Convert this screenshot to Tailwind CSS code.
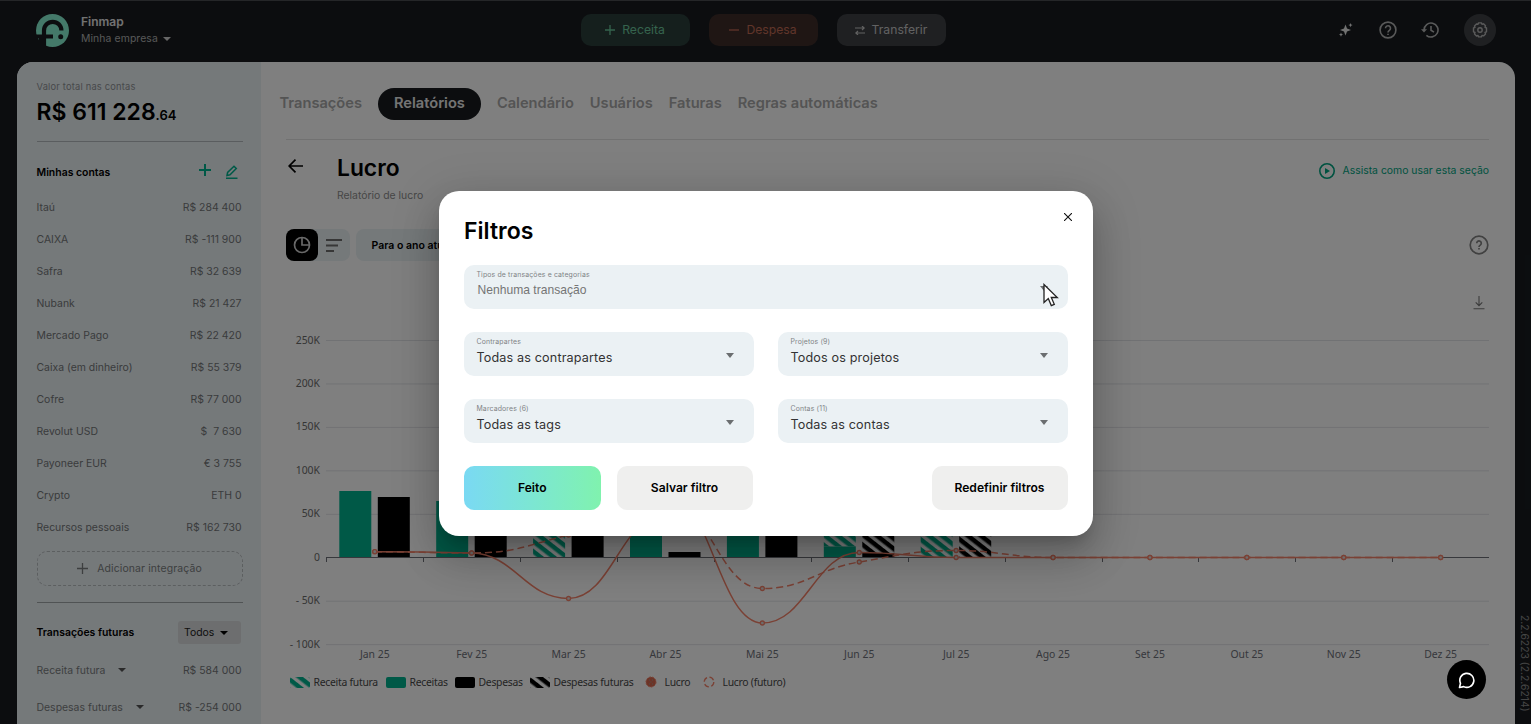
<!DOCTYPE html>
<html lang="pt-BR">
<head>
  <meta charset="UTF-8" />
  <meta name="viewport" content="width=device-width, initial-scale=1.0" />
  <title>Finmap - Lucro</title>
  <script src="https://cdn.jsdelivr.net/npm/@tailwindcss/browser@4"></script>
</head>
<body class="relative h-screen overflow-hidden bg-[#181b1f] font-['Inter',sans-serif] text-black">
  <!-- Header -->
  <header class="h-[62px] border-t border-[#4a4d50] flex items-start justify-between pl-[36px] pr-[35px] pt-[13px]">
    <div class="flex w-[394px]">
      <svg class="w-[33px] h-[33px]" viewBox="0 0 33 33">
        <circle cx="16.5" cy="16.5" r="16.5" fill="#88f2d2" />
        <path d="M8 32V16.500a8.700 8.700 0 0 1 17.400 0" fill="none" stroke="#181b1f" stroke-width="4.200" />
        <path d="M0 22.500h17" stroke="#181b1f" stroke-width="4" />
        <path d="M3 24h5v9H3z" fill="#181b1f" />
        <circle cx="24.700" cy="22.700" r="2.500" fill="#181b1f" />
      </svg>
      <div class="ml-3 pt-px">
        <p class="text-xs leading-[14px] font-semibold text-[#e4e4e4]">Finmap</p>
        <p class="mt-[3px] text-[10.4px] leading-[14px] tracking-[0.1px] text-[#b0b0b0] flex items-center">Minha empresa
          <svg class="ml-[5px] w-2 h-1" viewBox="0 0 8 4"><path d="M0 0h8L4 4z" fill="#cfcfcf" /></svg>
        </p>
      </div>
    </div>

    <div class="flex gap-[19px] text-[12.2px]">
      <button class="w-[109px] h-8 rounded-[10px] bg-[#2a3e3b] text-[#6ac79b] flex items-center justify-center gap-[7px]">
        <svg class="w-[10px] h-[10px]" viewBox="0 0 10 10"><path d="M5 0v10M0 5h10" stroke="currentColor" stroke-width="1.3" /></svg>Receita
      </button>
      <button class="w-[109px] h-8 rounded-[10px] bg-[#3e2d29] text-[#c06a55] flex items-center justify-center gap-[7px]">
        <svg class="w-[10px] h-[10px]" viewBox="0 0 10 10"><path d="M0 5h10" stroke="currentColor" stroke-width="1.3" /></svg>Despesa
      </button>
      <button class="w-[109px] h-8 rounded-[10px] bg-[#3f4145] text-[#c4c4c4] flex items-center justify-center gap-[7px]">
        <svg class="w-[10px] h-[9px]" viewBox="0 0 10 9" fill="none" stroke="currentColor" stroke-width="1.1"><path d="M0 2h9M7 0l2.2 2L7 4M10 7H1M3 5L.8 7 3 9" /></svg>Transferir
      </button>
    </div>

    <div class="w-[400px] flex items-center justify-end text-[#b5b5b5]">
      <svg class="w-[14px] h-[14px] mr-[26px]" viewBox="0 0 14 14" fill="#e5e5e5">
        <path d="M6.500 1.500l1.500 4 4 1.500-4 1.500-1.500 4-1.500-4L1 7l4-1.500z" />
        <path d="M11.500 0l.6 1.500 1.500.6-1.500.6-.6 1.500-.6-1.500-1.500-.6 1.500-.6zM2 9.500l.6 1.500 1.400.6-1.400.6L2 13.700l-.6-1.500L0 11.600 1.400 11z" />
      </svg>
      <svg class="w-[18px] h-[18px] mr-[24px]" viewBox="0 0 18 18" fill="none" stroke="currentColor" stroke-width="1.6">
        <circle cx="9" cy="9" r="7.900" /><path d="M6.500 7.200a2.500 2.500 0 1 1 3.900 2.100C9.400 10 9 10.300 9 11.400" /><path d="M9 12.700v1.400" />
      </svg>
      <svg class="w-[18px] h-[18px] mr-[25px]" viewBox="0 0 18 18" fill="none" stroke="currentColor" stroke-width="1.6">
        <path d="M3 9a7 7 0 1 1 2.400 5.300" /><path d="M0 8.300h6L3 11.600z" fill="currentColor" stroke="none" /><path d="M10 5v4.300l3 1.800" />
      </svg>
      <span class="w-8 h-8 rounded-full bg-[#3f4145] flex items-center justify-center">
        <svg class="w-4 h-4" viewBox="0 0 16 16" fill="none" stroke="currentColor" stroke-width="1.4">
          <path d="M6 2.300L6.600.9h2.800l.6 1.400 1.500-.5 2 2-.5 1.500 1.500.7v3.800l-1.500.6.5 1.500-2 2-1.500-.5-.6 1.500H6.600L6 13.500l-1.500.5-2-2 .5-1.500-1.500-.7V6l1.500-.6L2.500 4l2-2z" stroke-linejoin="round" />
          <circle cx="8" cy="8" r="2.200" />
        </svg>
      </span>
    </div>
  </header>

  <div class="ml-[17px] mr-4 h-[662px] rounded-t-2xl bg-white overflow-hidden flex">
    <!-- Sidebar -->
    <aside class="w-[243.5px] shrink-0 bg-[#ebf2f5] pl-[19.5px] pr-[18px] text-[10.45px] text-[#75787a]">
      <p class="pt-[18px] text-[9.3px] leading-[14px] tracking-[0.2px] text-[#8f9395]">Valor total nas contas</p>
      <p class="mt-[3px] h-[30px] text-[23px] leading-[30px] font-semibold text-black whitespace-nowrap">R$ 611 228<span class="text-[13px]">.64</span></p>
      <div class="mt-[14px] border-t border-[#b5bbbe]"></div>
      <div class="mt-[20px] h-[22px] flex items-center justify-between">
        <b class="font-semibold text-black">Minhas contas</b>
        <span class="flex items-center gap-[15px] pr-[5px] -mt-1.5 text-[#00b38f]">
          <svg class="w-3 h-3" viewBox="0 0 12 12"><path d="M6 0v12M0 6h12" stroke="currentColor" stroke-width="2" /></svg>
          <svg class="w-3 h-[14px] mt-[3px]" viewBox="0 0 12 14" fill="none" stroke="currentColor" stroke-width="1.5"><path d="M1 10.500l.6-3L8 1.300l2.300 2.200-6.300 6.300zM0 13.200h11.500" /></svg>
        </span>
      </div>
      <div id="accounts" class="mt-[8px]"></div>
      <button class="mt-[7px] w-[206px] h-[35px] rounded-[10px] border border-dashed border-[#b9bfc1] flex items-center justify-center gap-[9px] tracking-[0.12px] text-[#7b7f81]">
        <svg class="w-[11px] h-[11px]" viewBox="0 0 11 11"><path d="M5.500 0v11M0 5.500h11" stroke="currentColor" stroke-width="1.300" /></svg>Adicionar integração
      </button>
      <div class="mt-4 border-t border-[#a0a6a9]"></div>
      <div class="mt-[18px] h-[23px] flex items-center justify-between">
        <b class="font-semibold text-black">Transações futuras</b>
        <span class="w-[63px] h-[23px] mr-[1.500px] rounded-[3px] bg-[#dadcde] text-[#222] flex items-center pl-[6px] gap-[6px]">Todos
          <svg class="w-2 h-1" viewBox="0 0 8 4"><path d="M0 0h8L4 4z" fill="#000" /></svg>
        </span>
      </div>
      <div id="futures" class="mt-[8px]"></div>
    </aside>

    <!-- Main Section -->
    <main class="flex-1 pl-[19px]">
      <nav class="pt-[26px] flex items-center gap-4 text-[14.65px] font-semibold text-[#a9a9a9] whitespace-nowrap">
        <span>Transações</span>
        <span class="h-8 px-4 rounded-full bg-[#181b1f] text-[#e9e9e9] flex items-center">Relatórios</span>
        <span>Calendário</span>
        <span>Usuários</span>
        <span>Faturas</span>
        <span>Regras automáticas</span>
      </nav>
      <div class="mt-[19px] ml-[6px] mr-[26px] border-t border-[#e2e2e2]"></div>

      <div class="mt-[14px] ml-[8px] mr-[26px] flex">
        <svg class="mt-[5px] w-4 h-[14px]" viewBox="0 0 16 14" fill="none" stroke="#000" stroke-width="1.700"><path d="M15 7H1M7.500.7L1.200 7l6.300 6.300" /></svg>
        <div class="ml-[33.500px]">
          <h1 class="text-[22.8px] leading-[28px] font-semibold">Lucro</h1>
          <p class="mt-[7px] text-[10.4px] leading-[14px] text-[#8d8d8d]">Relatório de lucro</p>
        </div>
        <div class="ml-auto mt-[7px] h-5 flex items-center gap-2 text-[10.4px] text-[#00a581]">
          <svg class="w-4 h-4" viewBox="0 0 16 16"><circle cx="8" cy="8" r="7.200" fill="none" stroke="currentColor" stroke-width="1.600" /><path d="M6 5l5 3-5 3z" fill="currentColor" /></svg>
          Assista como usar esta seção
        </div>
      </div>

      <div class="mt-[26px] ml-[6px] mr-[26px] flex items-center">
        <div class="w-16 h-8 rounded-lg bg-[#ebf2f5] flex items-center">
          <span class="w-8 h-8 rounded-lg bg-black flex items-center justify-center">
            <svg class="w-[18px] h-[18px]" viewBox="0 0 18 18" fill="none" stroke="#d0d0d0" stroke-width="1.700"><circle cx="9" cy="9" r="7.500" /><path d="M9 1.500V9h7.500" /></svg>
          </span>
          <svg class="ml-2 w-4 h-[13px]" viewBox="0 0 16 13" fill="none" stroke="#6e6e6e" stroke-width="2"><path d="M0 1h16M0 6.500h12M0 12h8" /></svg>
        </div>
        <span class="ml-[6.500px] w-[160px] h-8 pt-px rounded-lg bg-[#ebf2f5] pl-[15.500px] flex items-center text-[10.5px] font-semibold">Para o ano atual</span>
        <svg class="ml-auto w-5 h-5" viewBox="0 0 20 20" fill="none" stroke="#828282" stroke-width="1.700"><circle cx="10" cy="10" r="8.800" /><path d="M7.700 8.200a2.300 2.300 0 1 1 3.600 1.900C10.300 10.800 10 11 10 11.900M10 13v1.500" /></svg>
      </div>

      <div class="mt-[35px] mr-[30px] flex justify-end">
        <svg class="w-[12px] h-[14px]" viewBox="0 0 12 14" fill="none" stroke="#777" stroke-width="1.100"><path d="M6 0v9.500M2.700 6.300L6 9.600l3.300-3.300M.5 12.800h11" /></svg>
      </div>

      <!-- the viewBox keeps the page's own coordinates -->
      <svg id="chart" class="mt-[15px] w-[1215px] h-[340px]" viewBox="280 325 1215 340"></svg>

      <div class="mt-[8px] ml-[10px] flex items-center font-['Noto_Sans',sans-serif] text-[10.4px] tracking-[-0.27px] leading-[18px] text-[#484848]">
        <svg class="w-5 h-[11px]" viewBox="0 0 20 11"><rect width="20" height="11" rx="2" fill="url(#hatchGreen)" /></svg>
        <span class="ml-1 w-[72px] whitespace-nowrap">Receita futura</span>
        <svg class="w-5 h-[11px]" viewBox="0 0 20 11"><rect width="20" height="11" rx="2" fill="#00b38f" /></svg>
        <span class="ml-1 w-[45px] whitespace-nowrap">Receitas</span>
        <svg class="w-5 h-[11px]" viewBox="0 0 20 11"><rect width="20" height="11" rx="2" /></svg>
        <span class="ml-1 w-[51px] whitespace-nowrap">Despesas</span>
        <svg class="w-5 h-[11px]" viewBox="0 0 20 11"><rect width="20" height="11" rx="2" fill="url(#hatchBlack)" /></svg>
        <span class="ml-1 w-[91px] whitespace-nowrap">Despesas futuras</span>
        <svg class="w-3 h-3" viewBox="0 0 12 12"><circle cx="6" cy="6" r="5" fill="#d8694f" stroke="#f5836a" stroke-dasharray="2 1" /><path d="M4 4h.9M7 4h.9M5.500 6h.9M4 8h.9M7 8h.9" stroke="#a0a0a0" /></svg>
        <span class="ml-2 w-[38px] whitespace-nowrap">Lucro</span>
        <svg class="w-3 h-3" viewBox="0 0 12 12"><circle cx="6" cy="6" r="4.800" fill="none" stroke="#f5836a" stroke-width="1.300" stroke-dasharray="5 2.500" /></svg>
        <span class="ml-2 whitespace-nowrap">Lucro (futuro)</span>
      </div>
    </main>
  </div>

  <span class="absolute right-0 top-[615px] [writing-mode:vertical-rl] text-[10.4px] leading-[13px] whitespace-nowrap text-[#8a8a8a]">2.2.6223 (2.2.6214)</span>

  <div class="absolute inset-0 bg-black/50"></div>

  <!-- Filter dialog -->
  <div class="absolute left-[439px] top-[191px] w-[654px] h-[345px] rounded-[20px] bg-white pl-[25px] pr-[25.500px] shadow-[0_11px_15px_-7px_rgba(0,0,0,0.2),0_24px_38px_3px_rgba(0,0,0,0.14),0_9px_46px_8px_rgba(0,0,0,0.12)]">
    <div class="h-[73.500px] pt-[26px] flex justify-between">
      <h2 class="text-[23px] leading-[28px] font-semibold">Filtros</h2>
      <svg class="-mt-[4px] mr-[-4px] w-[8px] h-[8px]" viewBox="0 0 8 8"><path d="M0 0l8 8M8 0L0 8" stroke="#111" stroke-width="1.100" /></svg>
    </div>
    <div class="grid grid-cols-2 gap-x-[24.500px] gap-y-[22.700px]" id="filters"></div>
    <div class="mt-[22.700px] flex gap-4 text-[12.100px] font-semibold">
      <button class="w-[136.500px] h-[44px] rounded-[10px] bg-linear-to-r from-[#7ad9f3] to-[#80f2ae]">Feito</button>
      <button class="w-[136px] h-[44px] rounded-[10px] bg-[#efefee]">Salvar filtro</button>
      <button class="ml-auto w-[136px] h-[44px] rounded-[10px] bg-[#efefee]">Redefinir filtros</button>
    </div>
  </div>

  <!-- Cursor -->
  <svg class="absolute left-[1043px] top-[283px] w-4 h-6" viewBox="0 0 16 24"><path d="M1 1.500v18l4.300-3.900 3 7 3-1.300-3-6.800H14.300z" fill="#fff" stroke="#222" stroke-width="1.300" /></svg>

  <!-- Chat button -->
  <button class="absolute left-[1447px] top-[660px] w-[39px] h-[39px] rounded-full bg-black flex items-center justify-center">
    <svg class="w-[18px] h-[18px]" viewBox="0 0 18 18" fill="none" stroke="#fff" stroke-width="1.600" stroke-linejoin="round"><path d="M1.500 16.500l1-4.200A7 7 0 1 1 5.700 15.600z" /></svg>
  </button>

  <script>
    const accounts = [
      ["Itaú", "R$ 284 400"], ["CAIXA", "R$ -111 900"], ["Safra", "R$ 32 639"], ["Nubank", "R$ 21 427"],
      ["Mercado Pago", "R$ 22 420"], ["Caixa (em dinheiro)", "R$ 55 379"], ["Cofre", "R$ 77 000"],
      ["Revolut USD", "$&nbsp; 7 630"], ["Payoneer EUR", "€ 3 755"], ["Crypto", "ETH 0"], ["Recursos pessoais", "R$ 162 730"]
    ];
    document.getElementById("accounts").innerHTML = accounts.map(([name, sum]) => `
      <div class="h-8 flex items-center justify-between pr-px"><span>${name}</span><span>${sum}</span></div>
    `).join("");

    document.getElementById("futures").innerHTML = [["Receita futura", "R$ 584 000"], ["Despesas futuras", "R$ -254 000"]].map(([name, sum]) => `
      <div class="h-[37px] flex items-center justify-between pr-px">
        <span class="flex items-center gap-[13px] text-[#7b7f81]">${name}
          <svg class="w-2 h-1" viewBox="0 0 8 4"><path d="M0 0h8L4 4z" fill="#555" /></svg>
        </span>
        <span>${sum}</span>
      </div>
    `).join("");

    const filters = [
      ["Tipos de transações e categorias", "Nenhuma transação"],
      ["Contrapartes", "Todas as contrapartes"], ["Projetos (9)", "Todos os projetos"],
      ["Marcadores (6)", "Todas as tags"], ["Contas (11)", "Todas as contas"]
    ];
    document.getElementById("filters").innerHTML = filters.map(([label, value], i) => `
      <div class="h-[44.500px] rounded-[10px] bg-[#ebf1f4] pl-[12.500px] pr-5 pt-[5.500px] flex items-start justify-between ${i === 0 ? 'col-span-2' : ''}">
        <div>
          <p class="text-[6.900px] leading-[10px] tracking-[0.15px] text-[#808385]">${label}</p>
          <p class="${i === 0 ? "pl-[1px] mt-px font-['Liberation_Sans',sans-serif] text-[12.100px] text-[#757575]" : 'mt-[1.500px] text-[12.600px] tracking-[0.15px] text-[#333]'} leading-[18px]">${value}</p>
        </div>
        <svg class="mt-[15.500px] w-2 h-[5px]" viewBox="0 0 8 5"><path d="M0 0h8L4 5z" fill="#6b6e70" /></svg>
      </div>
    `).join("");

    // Chart
    const zero = 557.7, step = 96.9, left = 326.3;
    const mid = i => left + step * (i + 0.5);
    let svg = `
      <defs>
        <pattern id="hatchGreen" width="8" height="8" patternUnits="userSpaceOnUse" patternTransform="rotate(38)"><rect width="8" height="8" fill="#fff"/><rect width="8" height="4.500" fill="#00b38f"/></pattern>
        <pattern id="hatchBlack" width="8" height="8" patternUnits="userSpaceOnUse" patternTransform="rotate(38)"><rect width="8" height="8" fill="#fff"/><rect width="8" height="4.500" fill="#000"/></pattern>
      </defs>`;
    ["250K", "200K", "150K", "100K", "50K", "0", "- 50K", "- 100K"].forEach((label, i) => {
      const y = 340.5 + i * 43.45;
      if (i !== 5) svg += `<path d="M326 ${y}H1489" stroke="#e3e4e8"/>`;
      svg += `<text x="320" y="${y + 3}" text-anchor="end" font-size="10.4" fill="#6b6b6b">${label}</text>`;
    });
    // [month, offset, top, bottom, fill]
    const bars = [
      [0, 13, 491, zero, "#00b38f"], [0, 51.5, 497, zero, "#000"],
      [1, 13, 501, zero, "#00b38f"], [1, 51.5, 505, zero, "#000"],
      [2, 13, 500, zero, "url(#hatchGreen)"], [2, 51.5, 500, zero, "#000"],
      [3, 13, 500, zero, "#00b38f"], [3, 51.5, 552, zero, "#000"],
      [4, 13, 500, zero, "#00b38f"], [4, 51.5, 500, zero, "#000"],
      [5, 13, 500, 546.5, "url(#hatchGreen)"], [5, 13, 546.5, zero, "#00b38f"],
      [5, 51.5, 500, 553, "url(#hatchBlack)"], [5, 51.5, 553, zero, "#000"],
      [6, 13, 500, zero, "url(#hatchGreen)"], [6, 51.5, 500, zero, "url(#hatchBlack)"]
    ];
    bars.forEach(([m, dx, top, bottom, fill]) => {
      svg += `<rect x="${left + step * m + dx}" y="${top}" width="32" height="${bottom - top}" fill="${fill}"/>`;
    });
    svg += `<path d="M326 557.5H1489" stroke="#6e7079"/>`;
    ["Jan", "Fev", "Mar", "Abr", "Mai", "Jun", "Jul", "Ago", "Set", "Out", "Nov", "Dez"].forEach((m, i) => {
      svg += `<path d="M${Math.round(left + step * i) + 0.5} 558v4" stroke="#6e7079"/>`;
      svg += `<text x="${mid(i)}" y="658" text-anchor="middle" font-size="10.4" fill="#6e7079">${m} 25</text>`;
    });
    // smooth cubic, flat at the extremes
    const reach = 0.45;
    const curve = (ys, from = 0) => {
      const slope = i => {
        const a = ys[i] - ys[i - 1], b = ys[i + 1] - ys[i];
        return a * b > 0 ? 2 * a * b / (a + b) : 0;
      };
      return ys.map((y, i) => i
        ? `C${mid(from + i - 1) + step * reach} ${ys[i - 1] + slope(i - 1) * reach} ${mid(from + i) - step * reach} ${y - slope(i) * reach} ${mid(from + i)} ${y}`
        : `M${mid(from)} ${y}`).join("");
    };
    const profit = [551.7, 553, 598.5, 514, 623, 552.5, 557.5, 557.5, 557.5, 557.5, 557.5, 557.5];
    const future = [551.7, 553, 535, 500, 588.5, 562, 550.5, 557.5, 557.5, 557.5, 557.5, 557.5];
    svg += `<g fill="none" stroke="#f5836a" stroke-width="1.500">
      <path d="${curve(profit.slice(0, 4))}"/>
      <path d="${curve([491, ...profit.slice(4)], 3)}"/>
      <path d="${curve(future)}" stroke-dasharray="7 4"/>
    </g>`;
    [profit, future].forEach(ys => ys.forEach((y, i) => {
      svg += `<circle cx="${mid(i)}" cy="${y}" r="2" fill="#ddd" stroke="#f5836a" stroke-width="1.300"/>`;
    }));
    const chart = document.getElementById("chart");
    chart.setAttribute("font-family", "'Noto Sans', sans-serif");
    chart.innerHTML = svg;
  </script>
</body>
</html>
